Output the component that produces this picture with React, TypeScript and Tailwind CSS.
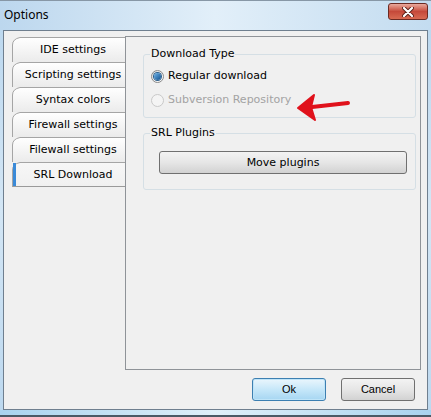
import React from 'react';

const tabs = ['IDE settings', 'Scripting settings', 'Syntax colors', 'Firewall settings', 'Filewall settings', 'SRL Download'];

function Tab({ label, index, selected, last }: { label: string; index: number; selected: boolean; last: boolean }) {
  const gid = `tabgrad${index}`;
  return (
    <div className="relative flex h-[25px] w-[113px] items-center justify-center pl-[9px]">
      <svg className="absolute inset-0" width="113" height="25" viewBox="0 0 113 25">
        <defs>
          <linearGradient id={gid} x1="0" y1="0" x2="0" y2="1">
            <stop offset="0" stopColor={selected ? '#f7f7f7' : '#ffffff'} />
            <stop offset="1" stopColor={selected ? '#f0f0f0' : '#ebebeb'} />
          </linearGradient>
        </defs>
        <path d="M0.5 25 L0.5 8 Q0.5 2 8 0.5 L113 0.5 L113 25 Z" fill={`url(#${gid})`} />
        <path d="M0.5 25 L0.5 8 Q0.5 2 8 0.5 L113 0.5" fill="none" stroke="#a5a5a5" />
        {last && <path d="M0.5 24.5 L113 24.5" stroke="#9a9a9a" />}
        {selected && <rect x="1" y="1" width="3" height="23" fill="#3a8ad8" />}
      </svg>
      <span className="relative text-[11px] leading-[14px] text-black">{label}</span>
    </div>
  );
}

function Radio({ checked, disabled, label }: { checked?: boolean; disabled?: boolean; label: string }) {
  return (
    <div className="flex h-[24px] items-center pl-[7px]">
      <span
        className={`flex h-[13px] w-[13px] items-center justify-center rounded-full border ${
          disabled ? 'border-[#c9c9c9] bg-[#f4f4f4]' : 'border-[#8a8a8a] bg-gradient-to-br from-[#e0e0e0] to-[#ffffff]'
        }`}
      >
        {checked && <span className="h-[7px] w-[7px] rounded-full bg-gradient-to-br from-[#6fb6ec] to-[#0d4f8c] ring-1 ring-[#2d5f8b]" />}
      </span>
      <span className={`ml-[4px] text-[11px] leading-[14px] ${disabled ? 'text-[#a3a3a3]' : 'text-black'}`}>{label}</span>
    </div>
  );
}

export default function App() {
  return (
    <div
      className="flex h-[417px] w-[431px] flex-col overflow-hidden bg-gradient-to-b from-[#b9d6ee] via-[#d3e6f5] to-[#bcd8ef] text-black"
      style={{ fontFamily: '"DejaVu Sans", Verdana, sans-serif' }}
    >
      {/* title bar */}
      <div className="flex h-[30px] shrink-0 items-start justify-between border-t border-[#8797a6] bg-gradient-to-r from-[#bcd7ee] via-[#e2eff9] to-[#c3dcf0] pl-[4px] pr-[3px]">
        <span className="mt-[6px] text-[12px] leading-[16px] text-black" style={{ fontFamily: '"Noto Sans", sans-serif' }}>
          Options
        </span>
        <div className="mt-[2px] flex h-[17px] w-[40px] items-center justify-center rounded-[3px] border border-[#6b2a22] bg-gradient-to-b from-[#e8a99d] via-[#c5493a] to-[#d86a52]">
          <svg width="12" height="10" viewBox="0 0 12 10">
            <path d="M2 1 L10 9 M10 1 L2 9" stroke="#5a2018" strokeWidth="4" strokeLinecap="round" />
            <path d="M2 1 L10 9 M10 1 L2 9" stroke="#ffffff" strokeWidth="2.2" strokeLinecap="round" />
          </svg>
        </div>
      </div>

      {/* client area */}
      <div className="ml-[3px] flex w-[425px] flex-1 flex-col border border-[#6f7f8f] bg-[#f0f0f0]">
        <div className="flex pl-[8px] pt-[5px]">
          <div className="mt-[1px] flex flex-col">
            {tabs.map((t, i) => (
              <Tab key={t} label={t} index={i} selected={i === tabs.length - 1} last={i === tabs.length - 1} />
            ))}
          </div>
          <div className="flex h-[334px] w-[296px] flex-col border border-[#8f9398] bg-[#f0f0f0]">
            <fieldset className="relative ml-[17px] mt-[10px] w-[273px] rounded-[3px] border border-[#d5dfe5] pb-[5px] pt-[3px]">
              <legend className="ml-[6px] px-[1px] text-[11px] leading-[14px]">Download Type</legend>
              <Radio checked label="Regular download" />
              <Radio disabled label="Subversion Repository" />
              <svg className="absolute left-[152px] top-[31px]" width="56" height="30" viewBox="0 0 56 30">
                <path d="M16 15 L52 11" stroke="#e0121c" strokeWidth="4" strokeLinecap="round" />
                <path d="M2 16 L18 3 L15 15 L19 28 Z" fill="#e0121c" stroke="#e0121c" strokeWidth="2" strokeLinejoin="round" />
              </svg>
            </fieldset>
            <fieldset className="ml-[17px] mt-[8px] w-[273px] rounded-[3px] border border-[#d5dfe5] pb-[15px] pt-[11px]">
              <legend className="ml-[6px] px-[1px] text-[11px] leading-[14px]">SRL Plugins</legend>
              <button className="ml-[15px] flex h-[23px] w-[248px] items-center justify-center rounded-[3px] border border-[#707070] bg-gradient-to-b from-[#f3f3f3] via-[#e6e6e6] to-[#d2d2d2] text-[11px] leading-[14px] text-black">
                Move plugins
              </button>
            </fieldset>
          </div>
        </div>
        <div
          className="mt-[8px] flex justify-end gap-[15px] pr-[12px]"
          style={{ fontFamily: '"Liberation Sans", Arial, sans-serif' }}
        >
          <button className="flex h-[23px] w-[74px] items-center justify-center rounded-[3px] border border-[#3c7fb1] bg-gradient-to-b from-[#eaf6fd] via-[#c6e7f9] to-[#a6d6f2] text-[11px] text-black shadow-[inset_0_0_0_1px_#bfe4f8]">
            Ok
          </button>
          <button className="flex h-[23px] w-[74px] items-center justify-center rounded-[3px] border border-[#707070] bg-gradient-to-b from-[#f3f3f3] via-[#e6e6e6] to-[#d2d2d2] text-[11px] text-black">
            Cancel
          </button>
        </div>
      </div>

      {/* bottom frame */}
      <div className="h-[7px] shrink-0 border-b-2 border-[#4a5a66] bg-gradient-to-r from-[#a9d3ee] via-[#dff0fa] to-[#a9d3ee]" />
    </div>
  );
}
